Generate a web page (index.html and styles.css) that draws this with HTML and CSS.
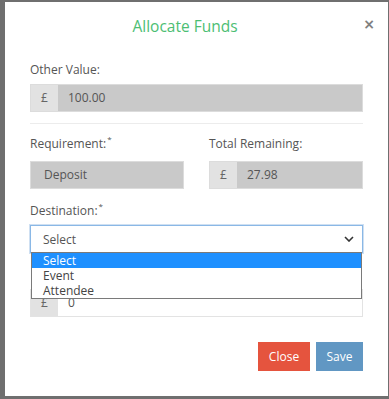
FILE: index.html
```html
<!DOCTYPE html>
<html>
<head>
  <title>Allocate Funds</title>
  <link rel="stylesheet" href="styles.css">
</head>
<body>
  <div class="modal">
    <div class="modal-header">
      <h4 class="modal-title">Allocate Funds</h4>
      <button type="button" class="close">&times;</button>
    </div>

    <div class="modal-body">
      <div class="form-group">
        <label>Other Value:</label>
        <div class="input-group readonly">
          <span class="addon">£</span>
          <span class="field">100.00</span>
        </div>
      </div>

      <hr>

      <div class="row">
        <div class="form-group col">
          <label>Requirement:<sup>*</sup></label>
          <div class="input-group readonly">
            <span class="field">Deposit</span>
          </div>
        </div>
        <div class="form-group col">
          <label>Total Remaining:</label>
          <div class="input-group readonly">
            <span class="addon">£</span>
            <span class="field">27.98</span>
          </div>
        </div>
      </div>

      <div class="form-group">
        <label>Destination:<sup>*</sup></label>
        <div class="select-wrap">
          <div class="select">
            <span>Select</span>
            <svg width="10" height="6" viewBox="0 0 10 6"><path d="M1 1l4 4 4-4" fill="none" stroke="#333" stroke-width="1.6"/></svg>
          </div>
          <ul class="options">
            <li class="active">Select</li>
            <li>Event</li>
            <li>Attendee</li>
          </ul>
        </div>
      </div>

      <!-- amount label sits under the open dropdown -->
      <div class="form-group amount">
        <div class="input-group">
          <span class="addon">£</span>
          <span class="field">0</span>
        </div>
      </div>
    </div>

    <div class="modal-footer">
      <button type="button" class="btn btn-close">Close</button>
      <button type="button" class="btn btn-save">Save</button>
    </div>
  </div>
</body>
</html>
```

FILE: styles.css
```css
body {
  margin: 0;
  background: #6f6f6f;
  font-family: "Open Sans", "Liberation Sans", sans-serif;
  color: #555;
}

.modal {
  margin: 2px 0 0 5px;
  width: 383px;
  height: 394px;
  background: #fff;
}

.modal-header {
  position: relative;
  height: 45px;
  padding-top: 14px;
  box-sizing: border-box;
}

.modal-title {
  margin: 0;
  padding-right: 23px;
  text-align: center;
  font-size: 15.5px;
  font-weight: 400;
  line-height: 20px;
  color: #4cbe73;
}

.close {
  position: absolute;
  top: 12px;
  right: 13px;
  border: 0;
  background: none;
  padding: 0;
  font-family: "DejaVu Sans", sans-serif;
  font-size: 14px;
  font-weight: bold;
  line-height: 20px;
  color: #808080;
}

.modal-body {
  padding: 14px 25px 0;
}

.form-group {
  margin-bottom: 11px;
}

label {
  display: block;
  font-size: 12px;
  line-height: 18px;
  margin-bottom: 5px;
  color: #555;
}

label sup {
  font-size: 8px;
  line-height: 0;
  vertical-align: 6px;
  margin-left: 1px;
}

.row label {
  margin-bottom: 8px;
}

.input-group {
  display: flex;
  height: 28px;
  font-size: 12px;
  line-height: 26px;
  border: 1px solid #e3e3e3;
  box-sizing: border-box;
}

.addon {
  width: 27px;
  flex: none;
  text-align: center;
  background: #e2e2e2;
  color: #666;
}

.field {
  flex: 1;
  padding-left: 10px;
  color: #555;
}

.readonly {
  background: #c9c9c9;
  border-color: #dcdcdc;
}

.readonly .field:first-child {
  padding-left: 13px;
}

hr {
  border: 0;
  border-top: 1px solid #ececec;
  margin: 1px 0 11px;
}

.row {
  display: flex;
  gap: 25px;
}

.col {
  flex: 1;
  margin-bottom: 13px;
}

.select-wrap {
  position: relative;
  margin-top: 3px;
}

.select {
  display: flex;
  align-items: center;
  justify-content: space-between;
  height: 28px;
  padding: 0 8px 0 12px;
  box-sizing: border-box;
  border: 1px solid #8ab8e6;
  box-shadow: 0 0 0 1px #cfe0f2;
  font-size: 12px;
  color: #555;
}

.options {
  position: absolute;
  top: 27px;
  left: 1px;
  right: 1px;
  margin: 0;
  padding: 0;
  list-style: none;
  background: #fff;
  border: 1px solid #7a7a7a;
  font-size: 12px;
  line-height: 15px;
  color: #444;
  z-index: 2;
}

.options li {
  padding-left: 11px;
}

.options .active {
  background: #1e90ff;
  color: #fff;
}

.amount {
  padding-top: 25px;
}

.modal-footer {
  display: flex;
  justify-content: flex-end;
  gap: 6px;
  padding: 14px 25px 0;
}

.btn {
  height: 29px;
  border: 0;
  padding: 0 10px;
  font-family: inherit;
  font-size: 12px;
  color: #fff;
}

.btn-close {
  width: 52px;
  background: #e5543e;
}

.btn-save {
  width: 47px;
  background: #6197c3;
}
```
